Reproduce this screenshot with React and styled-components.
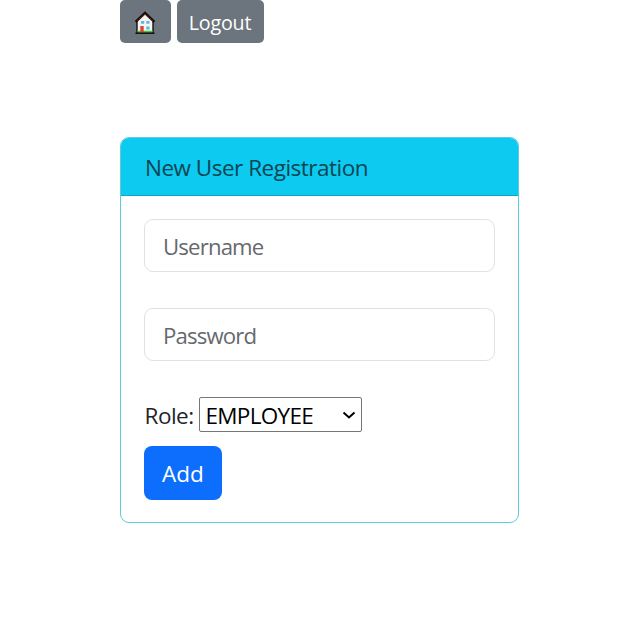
import React from "react";
import styled, { createGlobalStyle } from "styled-components";

const GlobalStyle = createGlobalStyle`
  *, *::before, *::after { box-sizing: border-box; }
  body {
    margin: 0;
    background: #fff;
    color: #212529;
    font: 400 22.5px/34px "Open Sans", "Noto Sans", sans-serif;
  }
`;

const Page = styled.main`
  width: 399px;
  margin-left: 120px;
`;

const Toolbar = styled.nav`
  display: flex;
  gap: 6px;
  height: 43px;
  margin-bottom: 94px;
`;

const Button = styled.button`
  display: flex;
  align-items: center;
  justify-content: center;
  width: ${(p) => p.$width}px;
  height: 43px;
  margin: 0;
  padding: ${(p) => p.$top || 0}px 0 0;
  border: 0;
  border-radius: 5px;
  background: #6c757d;
  color: #fff;
  font: inherit;
  font-size: 19.7px;
  letter-spacing: ${(p) => p.$spacing || 0}px;
`;

const AddButton = styled(Button)`
  height: 54px;
  margin-top: 14px;
  border-radius: 8px;
  background: #0d6efd;
  font-size: 22.5px;
`;

const Card = styled.section`
  height: 386px;
  border: 1px solid #5fcbd8;
  border-radius: 9px;
  overflow: hidden;
`;

const CardHeader = styled.header`
  height: 58px;
  padding: 13px 24px 0;
  border-bottom: 1px solid #14a3c0;
  background: #0dcaf0;
  color: #0c4552;
  letter-spacing: ${(p) => p.$spacing}px;
  white-space: nowrap;
`;

const Form = styled.form`
  padding: 23px 23px 0;
`;

const Input = styled.input`
  display: block;
  width: 351px;
  height: 53px;
  margin: 0 0 36px;
  padding: 2px 18px 0;
  border: 1px solid #dfe2e5;
  border-radius: 9px;
  background: #fff;
  color: #212529;
  font: inherit;
  font-size: 22.2px;
  letter-spacing: ${(p) => p.$spacing}px;
  &::placeholder { color: #66696d; opacity: 1; }
`;

const RoleRow = styled.div`
  display: flex;
  align-items: center;
  height: 35px;
`;

const RoleLabel = styled.label`
  width: 55px;
  padding: 2px 0 0 0.5px;
  white-space: nowrap;
  letter-spacing: ${(p) => p.$spacing}px;
`;

const Select = styled.button`
  display: flex;
  align-items: center;
  justify-content: space-between;
  width: 163px;
  height: 35px;
  padding: 2px 5px 0 5.5px;
  border: 1px solid #767676;
  border-radius: 2px;
  background: #fff;
  color: #000;
  font: inherit;
  line-height: 32px;
  letter-spacing: ${(p) => p.$spacing}px;
`;

const Chevron = styled.svg`
  display: block;
  width: 14px;
  height: 10px;
  margin-top: -1px;
`;

const House = styled.svg`
  display: block;
  width: 22px;
  height: 24px;
`;

function HouseIcon() {
  return (
    <House viewBox="0 0 22 24" aria-hidden="true">
      <path d="M3 9.5v12.5h16V9.5L11 2z" fill="#f6f3f0" stroke="#181310" strokeWidth="1.4" />
      <path d="M3.5 20.6h15" stroke="#48c545" strokeWidth="1.8" />
      <path d="M1.4 22.2h19.2" stroke="#10150f" strokeWidth="1.4" />
      <path d="M1.6 10.8 11 2l9.4 8.8" fill="none" stroke="#0f0b09" strokeWidth="2.4" />
      <path d="M3 10.2 11 2.9l8 7.3" fill="none" stroke="#7e2b20" strokeWidth="0.9" />
      <path d="M6.3 15h3.4v6H6.3z" fill="#d64632" />
      <path d="M7 10h3.2v2.8H7zM12.3 10h3.2v2.8h-3.2zM12.3 15.6h3.2v2.8h-3.2z" fill="#51bde4" />
    </House>
  );
}

export default function App() {
  return (
    <>
      <GlobalStyle />
      <Page>
        <Toolbar>
          <Button $width={50.5} $top={2} aria-label="Home"><HouseIcon /></Button>
          <Button $width={87} $top={2} $spacing={-0.2}>Logout</Button>
        </Toolbar>
        <Card>
          <CardHeader $spacing={-0.5}>New User Registration</CardHeader>
          <Form>
            <Input type="text" placeholder="Username" $spacing={-0.85} />
            <Input type="password" placeholder="Password" $spacing={-0.85} />
            <RoleRow>
              <RoleLabel $spacing={-0.5}>Role:</RoleLabel>
              <Select type="button" $spacing={-0.7}>
                EMPLOYEE
                <Chevron viewBox="0 0 14 10" aria-hidden="true">
                  <path d="m1.5 2.5 5.5 5 5.5-5" fill="none" stroke="#000" strokeWidth="2" />
                </Chevron>
              </Select>
            </RoleRow>
            <AddButton type="button" $width={78} $top={2}>Add</AddButton>
          </Form>
        </Card>
      </Page>
    </>
  );
}
